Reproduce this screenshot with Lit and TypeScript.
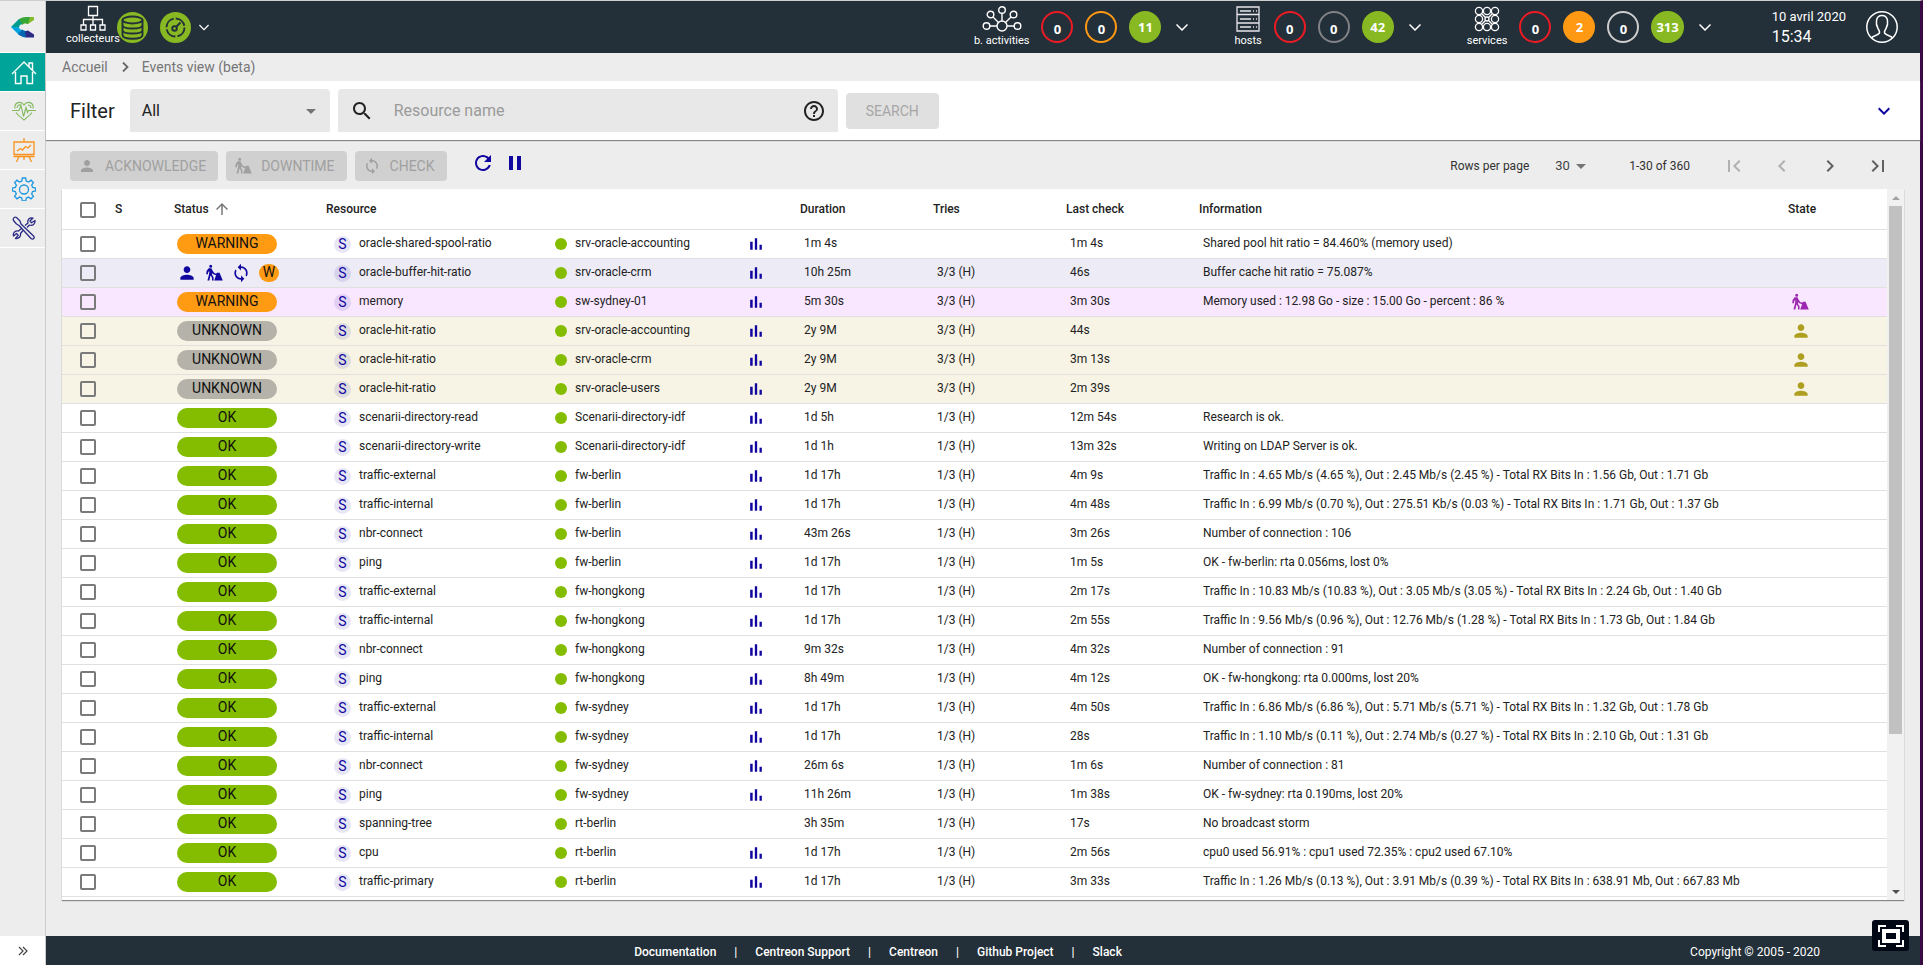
import { LitElement, html, css, svg, nothing } from "lit";
import { customElement } from "lit/decorators.js";
import { classMap } from "lit/directives/class-map.js";

type Status = "WARNING" | "UNKNOWN" | "OK";
interface Row {
  status: Status;
  name: string;
  parent: string;
  duration: string;
  tries: string;
  last: string;
  info: string;
  graph?: boolean;
  state?: "downtime" | "ack";
  hover?: boolean;
}

const r = (
  status: Status, name: string, parent: string, duration: string,
  tries: string, last: string, info: string, extra: Partial<Row> = {},
): Row => ({ status, name, parent, duration, tries, last, info, graph: true, ...extra });

const H3 = "3/3 (H)";
const H1 = "1/3 (H)";

const ROWS: Row[] = [
  r("WARNING", "oracle-shared-spool-ratio", "srv-oracle-accounting", "1m 4s", "", "1m 4s", "Shared pool hit ratio = 84.460% (memory used)"),
  r("WARNING", "oracle-buffer-hit-ratio", "srv-oracle-crm", "10h 25m", H3, "46s", "Buffer cache hit ratio = 75.087%", { hover: true }),
  r("WARNING", "memory", "sw-sydney-01", "5m 30s", H3, "3m 30s", "Memory used : 12.98 Go - size : 15.00 Go - percent : 86 %", { state: "downtime" }),
  r("UNKNOWN", "oracle-hit-ratio", "srv-oracle-accounting", "2y 9M", H3, "44s", "", { state: "ack" }),
  r("UNKNOWN", "oracle-hit-ratio", "srv-oracle-crm", "2y 9M", H3, "3m 13s", "", { state: "ack" }),
  r("UNKNOWN", "oracle-hit-ratio", "srv-oracle-users", "2y 9M", H3, "2m 39s", "", { state: "ack" }),
  r("OK", "scenarii-directory-read", "Scenarii-directory-idf", "1d 5h", H1, "12m 54s", "Research is ok."),
  r("OK", "scenarii-directory-write", "Scenarii-directory-idf", "1d 1h", H1, "13m 32s", "Writing on LDAP Server is ok."),
  r("OK", "traffic-external", "fw-berlin", "1d 17h", H1, "4m 9s", "Traffic In : 4.65 Mb/s (4.65 %), Out : 2.45 Mb/s (2.45 %) - Total RX Bits In : 1.56 Gb, Out : 1.71 Gb"),
  r("OK", "traffic-internal", "fw-berlin", "1d 17h", H1, "4m 48s", "Traffic In : 6.99 Mb/s (0.70 %), Out : 275.51 Kb/s (0.03 %) - Total RX Bits In : 1.71 Gb, Out : 1.37 Gb"),
  r("OK", "nbr-connect", "fw-berlin", "43m 26s", H1, "3m 26s", "Number of connection : 106"),
  r("OK", "ping", "fw-berlin", "1d 17h", H1, "1m 5s", "OK - fw-berlin: rta 0.056ms, lost 0%"),
  r("OK", "traffic-external", "fw-hongkong", "1d 17h", H1, "2m 17s", "Traffic In : 10.83 Mb/s (10.83 %), Out : 3.05 Mb/s (3.05 %) - Total RX Bits In : 2.24 Gb, Out : 1.40 Gb"),
  r("OK", "traffic-internal", "fw-hongkong", "1d 17h", H1, "2m 55s", "Traffic In : 9.56 Mb/s (0.96 %), Out : 12.76 Mb/s (1.28 %) - Total RX Bits In : 1.73 Gb, Out : 1.84 Gb"),
  r("OK", "nbr-connect", "fw-hongkong", "9m 32s", H1, "4m 32s", "Number of connection : 91"),
  r("OK", "ping", "fw-hongkong", "8h 49m", H1, "4m 12s", "OK - fw-hongkong: rta 0.000ms, lost 20%"),
  r("OK", "traffic-external", "fw-sydney", "1d 17h", H1, "4m 50s", "Traffic In : 6.86 Mb/s (6.86 %), Out : 5.71 Mb/s (5.71 %) - Total RX Bits In : 1.32 Gb, Out : 1.78 Gb"),
  r("OK", "traffic-internal", "fw-sydney", "1d 17h", H1, "28s", "Traffic In : 1.10 Mb/s (0.11 %), Out : 2.74 Mb/s (0.27 %) - Total RX Bits In : 2.10 Gb, Out : 1.31 Gb"),
  r("OK", "nbr-connect", "fw-sydney", "26m 6s", H1, "1m 6s", "Number of connection : 81"),
  r("OK", "ping", "fw-sydney", "11h 26m", H1, "1m 38s", "OK - fw-sydney: rta 0.190ms, lost 20%"),
  r("OK", "spanning-tree", "rt-berlin", "3h 35m", H1, "17s", "No broadcast storm", { graph: false }),
  r("OK", "cpu", "rt-berlin", "1d 17h", H1, "2m 56s", "cpu0 used 56.91% : cpu1 used 72.35% : cpu2 used 67.10%"),
  r("OK", "traffic-primary", "rt-berlin", "1d 17h", H1, "3m 33s", "Traffic In : 1.26 Mb/s (0.13 %), Out : 3.91 Mb/s (0.39 %) - Total RX Bits In : 638.91 Mb, Out : 667.83 Mb"),
];

const PATHS = {
  person: "M12 12c2.21 0 4-1.79 4-4s-1.79-4-4-4-4 1.79-4 4 1.79 4 4 4zm0 2c-2.67 0-8 1.34-8 4v2h16v-2c0-2.66-5.33-4-8-4z",
  sync: "M12 4V1L8 5l4 4V6c3.31 0 6 2.69 6 6 0 1.01-.25 1.97-.7 2.8l1.46 1.46C19.54 15.03 20 13.57 20 12c0-4.42-3.58-8-8-8zm0 14c-3.31 0-6-2.69-6-6 0-1.01.25-1.97.7-2.8L5.24 7.74C4.46 8.97 4 10.43 4 12c0 4.42 3.58 8 8 8v3l4-4-4-4v3z",
  worker: "M7.6 1a2 2 0 1 1 0 4 2 2 0 0 1 0-4zM4.800 5.500h3.800l1.600 3.500 2.200 3 1.200.8h1.600l.8-1.300h3.400L23.700 22H12.200l2.600-7-3.700-1.400-1.300-1.700-.4 2.600 2 3V22H9.300v-4l-2-2.600L5.800 22H3.300l2.200-8.600.3-4-1.500 1.200-.4 3.200H1.700l.4-4.600z",
  search: "M15.5 14h-.79l-.28-.27C15.41 12.59 16 11.11 16 9.5 16 5.91 13.09 3 9.5 3S3 5.91 3 9.5 5.91 16 9.5 16c1.61 0 3.09-.59 4.23-1.57l.27.28v.79l5 4.99L20.49 19l-4.99-5zm-6 0C7.01 14 5 11.99 5 9.5S7.01 5 9.5 5 14 7.01 14 9.5 11.99 14 9.5 14z",
  help: "M11 18h2v-2h-2v2zm1-16C6.48 2 2 6.48 2 12s4.48 10 10 10 10-4.48 10-10S17.52 2 12 2zm0 18c-4.41 0-8-3.59-8-8s3.59-8 8-8 8 3.59 8 8-3.59 8-8 8zm0-14c-2.21 0-4 1.79-4 4h2c0-1.1.9-2 2-2s2 .9 2 2c0 2-3 1.75-3 5h2c0-2.25 3-2.5 3-5 0-2.21-1.79-4-4-4z",
  refresh: "M17.65 6.35C16.2 4.9 14.21 4 12 4c-4.42 0-7.99 3.58-7.99 8s3.57 8 7.99 8c3.73 0 6.84-2.55 7.73-6h-2.08c-.82 2.33-3.04 4-5.65 4-3.31 0-6-2.69-6-6s2.69-6 6-6c1.66 0 3.14.69 4.22 1.78L13 11h7V4l-2.35 2.35z",
  pause: "M6 19h4V5H6v14zm8-14v14h4V5h-4z",
  bars: "M5 9.2h3V19H5zM10.6 5h2.8v14h-2.8zm5.6 8H19v6h-2.8z",
  expand: "M16.59 8.59L12 13.17 7.41 8.59 6 10l6 6 6-6z",
  drop: "M7 10l5 5 5-5z",
  up: "M4 12l1.41 1.41L11 7.83V20h2V7.83l5.58 5.59L20 12l-8-8-8 8z",
  left: "M15.41 7.41L14 6l-6 6 6 6 1.41-1.41L10.83 12z",
  right: "M10 6L8.59 7.41 13.17 12l-4.58 4.59L10 18l6-6z",
  first: "M18.41 16.59L13.82 12l4.59-4.59L17 6l-6 6 6 6zM6 6h2v12H6z",
  last: "M5.59 7.41L10.18 12l-4.59 4.59L7 18l6-6-6-6zM16 6h2v12h-2z",
};
const icon = (name: keyof typeof PATHS, size = 24) =>
  html`<svg class="icon" width=${size} height=${size} viewBox="0 0 24 24" fill="currentColor" aria-hidden="true"><path d=${PATHS[name]}></path></svg>`;

const shared = css`
  * { box-sizing: border-box; }
  svg { display: block; flex: none; }
  button { font: inherit; color: inherit; border: 0; padding: 0; background: none; display: flex; align-items: center; justify-content: center; }
  a { color: inherit; text-decoration: none; }
`;

@customElement("side-nav")
export class SideNav extends LitElement {
  static styles = [shared, css`
    :host { display: flex; flex-direction: column; width: 46px; background: #ededed; border-right: 1px solid #ccc; }
    .logo { height: 52px; display: flex; align-items: center; justify-content: center; padding-left: 1px; border-bottom: 1px solid #fff; }
    .item { height: 39px; display: flex; align-items: center; justify-content: center; border-bottom: 1px solid #fff; padding-left: 3px; }
    .active { background: #00a499; }
    .expand { margin-top: auto; height: 29px; background: #fff; width: 100%; color: #444; }
  `];
  render() {
    return html`
      <a class="logo" href="#" aria-label="Centreon">
        <svg width="24" height="22" viewBox="0 0 24 22">
          <path d="M15 1h8v3l-6 4-4-1z" fill="#84bd2a"></path>
          <path d="M15 1c-3 0-5.500 1-8 3l4 5c2-2 4-2.500 6-1l2-7z" fill="#36a635"></path>
          <path d="M8 3L0 11l8 .5c0-1.500 1-3 3-3.500z" fill="#009c8d"></path>
          <path d="M0 11l8 8 3-5c-2-.5-3-1.500-3-3z" fill="#00a3e0"></path>
          <path d="M7 18c2.500 2 5 3.500 8 3.500l2-7c-2 1-4 .5-6-1z" fill="#0067b1"></path>
          <path d="M15 21.500h8v-3l-6-4-3 1z" fill="#2b2b86"></path>
        </svg>
      </a>
      <a class="item active" href="#" aria-label="Accueil">
        <svg width="26" height="25" viewBox="0 0 26 25" fill="none" stroke="#fff" stroke-width="1.400">
          <path d="M1 14L13 2l12 12M4.500 12v11.500H10V16h6v7.500h5.500V12M18 6.500V3h3.500v7"></path>
        </svg>
      </a>
      <a class="item" href="#" aria-label="Monitoring">
        <svg width="26" height="20" viewBox="0 0 26 20" fill="none" stroke="#7fb95c" stroke-width="1.100">
          <path d="M1 9.500h7l2-5 2.500 11 2.500-9 1.500 5 1-2H25M4 7.500C3 1 10-.5 13 4c3-4.500 10-3 9 3.500M5 11.500c2 3 5 5 8 7.500 3-2.500 6-4.500 8-7.500M6 7c0-2.500 2-3.500 4-3M20 7c0-2-1-3-3-3"></path>
        </svg>
      </a>
      <a class="item" href="#" aria-label="Reporting">
        <svg width="24" height="24" viewBox="0 0 24 24" fill="none" stroke="#f7931e" stroke-width="1.300">
          <path d="M2 4h20v12.500H2zM1.500 18.500h21M12 0v4M7 18.500L4.500 24M17 18.500l2.500 5.500M12 18.500V22M5 13l3.500-2.500 2 1.500 3-3.500 2.500 1.500 3-3"></path>
        </svg>
      </a>
      <a class="item" href="#" aria-label="Configuration">
        <svg width="24" height="24" viewBox="0 0 24 24" fill="none" stroke="#1c97e0" stroke-width="1.300">
          <path d="M10.300 1h3.400l.5 3 2.300 1 2.600-1.800 2.300 2.400-1.700 2.500 1 2.400 2.900.5v3l-3 .6-1 2.300 1.800 2.500-2.400 2.400-2.500-1.700-2.300 1-.5 2.900h-3.400l-.5-3-2.300-.9L5 21.800l-2.400-2.400 1.700-2.500-1-2.300-2.900-.6v-3l3-.5 1-2.400L2.600 5.600 5 3.200 7.500 5l2.300-1z"></path>
          <circle cx="12" cy="12.500" r="4.500"></circle>
        </svg>
      </a>
      <a class="item" href="#" aria-label="Administration">
        <svg width="24" height="24" viewBox="0 0 24 24" fill="none" stroke="#2b2b86" stroke-width="1.300" stroke-linejoin="round">
          <path d="M1.500 4.500c-1-2 1-4 3-3L8 5l1 3 12.500 12c2 2-.5 4-2.500 2.500L7 9.500 4.500 8z"></path>
          <path d="M13 9.500L16 7c-1-3 1.500-6 5-5l-3 3 1.500 1.800L23 4.500c.5 3.500-2.500 5.500-5.500 4.500L15 11.500M9.500 12.500L6.500 15c-3-.5-6 1.500-5 5l3-2.500 1.700 1.800L3.500 22.500C7 23 9 20.500 8.500 17.500l2.500-3"></path>
        </svg>
      </a>
      <button class="expand" aria-label="Expand menu">
        <svg width="10" height="10" viewBox="0 0 10 10" fill="none" stroke="currentColor" stroke-width="1.200"><path d="M1 1l4 4-4 4M5 1l4 4-4 4"></path></svg>
      </button>`;
  }
}

@customElement("top-bar")
export class TopBar extends LitElement {
  static styles = [shared, css`
    :host { display: flex; height: 52px; background: #232f39; color: #fff; padding: 0 22px 0 20px; font: 11px/14px Roboto, sans-serif; }
    .group { display: flex; gap: 12px; height: 52px; align-items: center; }
    .tag { display: flex; flex-direction: column; align-items: center; gap: 2px; }
    .pollers .tag { margin-right: -15px; line-height: 12px; padding-bottom: 4px; }
    .right { display: flex; margin-left: auto; gap: 46px; }
    .pill { height: 32px; min-width: 32px; border-radius: 16px; padding: 0 3px; display: flex; align-items: center; justify-content: center; font: bold 13px/16px "Open Sans", sans-serif; border: 2px solid transparent; }
    .hollow { padding-top: 4px; }
    .red { border-color: #ed1c24; }
    .orange { border-color: #ff9913; }
    .grey { border-color: #818285; }
    .light { border-color: #cdcdcd; }
    .full-green { background: #88b922; }
    .full-orange { background: #ff9913; }
    .more { margin-left: 3px; }
    .pollers .more { margin-left: -4px; }
    .clock { margin-left: 15px; display: flex; flex-direction: column; align-self: center; font-size: 13px; line-height: 20px; white-space: nowrap; }
    .time { font-size: 16px; }
    .user { margin-left: -26px; }
  `];
  private more = (label: string, w = 12) => html`<button class="more" aria-label=${label}>
    <svg width=${w} height="7" viewBox="0 0 12 7" fill="none" stroke="#fff" stroke-width="1.500"><path d="M.5.500l5.500 5.500 5.500-5.500"></path></svg></button>`;
  private pill = (n: string, kind: string) =>
    html`<a href="#" class=${classMap({ pill: true, hollow: !kind.startsWith("full"), [kind]: true })}>${n}</a>`;
  render() {
    const circles = [[5, 5], [13, 5], [21, 5], [5, 13], [21, 13], [5, 21], [13, 21], [21, 21]];
    return html`
      <div class="group pollers">
        <div class="tag">
          <svg width="26" height="26" viewBox="0 0 26 26" fill="none" stroke="#fff" stroke-width="1.300">
            <path d="M8.500 1.500h9v9h-9zM13 10.500V20M3.500 20v-5.500h19V20M1 20h5v5H1zM10.500 20h5v5h-5zM20 20h5v5h-5z"></path>
          </svg>
          <span>collecteurs</span>
        </div>
        <svg width="31" height="31" viewBox="0 0 31 31"><circle cx="15.500" cy="15.500" r="15.500" fill="#88b922"></circle>
          <g fill="none" stroke="#232f39" stroke-width="1.900"><ellipse cx="15.500" cy="8" rx="10" ry="3.500"></ellipse>
          <path d="M5.500 8v15c0 5 20 5 20 0V8M5.500 13c0 4.700 20 4.700 20 0M5.500 18c0 4.700 20 4.700 20 0"></path></g></svg>
        <svg width="31" height="31" viewBox="0 0 31 31"><circle cx="15.500" cy="15.500" r="15.500" fill="#88b922"></circle>
          <g fill="none" stroke="#232f39" stroke-width="1.900"><circle cx="15.500" cy="15.500" r="9" stroke-dasharray="12 2.140"></circle><circle cx="14.500" cy="16.500" r="2.300"></circle><path d="M16 15l4.500-4.500"></path></g></svg>
        ${this.more("Pollers details", 10)}
      </div>
      <div class="right">
        <div class="group">
          <div class="tag">
            <svg width="40" height="26" viewBox="0 0 40 26" fill="none" stroke="#fff" stroke-width="1.400">
              <circle cx="20" cy="4" r="3.300"></circle><circle cx="8.500" cy="8.500" r="3.300"></circle><circle cx="31.500" cy="8.500" r="3.300"></circle>
              <circle cx="4.500" cy="20" r="3.300"></circle><circle cx="35.500" cy="20" r="3.300"></circle><circle cx="20" cy="20" r="5"></circle>
              <path d="M20 7.500V15M11 11l5.500 5.500M29 11l-5.500 5.500M8 20h7M25 20h7"></path>
            </svg>
            <span>b. activities</span>
          </div>
          ${this.pill("0", "red")}${this.pill("0", "orange")}${this.pill("11", "full-green")}
          ${this.more("Business activities details")}
        </div>
        <div class="group">
          <div class="tag">
            <svg width="24" height="26" viewBox="0 0 24 26" fill="none" stroke="#e8e6ea" stroke-width="1.300">
              <path d="M1 1h22v24H1zM1 8.500h22M1 17h22M4 5h11M4 13h11M4 21h11M17 5h1M20 5h1M17 13h1M20 13h1M17 21h1M20 21h1"></path>
            </svg>
            <span>hosts</span>
          </div>
          ${this.pill("0", "red")}${this.pill("0", "grey")}${this.pill("42", "full-green")}
          ${this.more("Hosts details")}
        </div>
        <div class="group">
          <div class="tag">
            <svg width="26" height="26" viewBox="0 0 26 26" fill="none" stroke="#fff" stroke-width="1.300">
              ${circles.map(([x, y]) => svg`<circle cx=${x} cy=${y} r="3.600"></circle>`)}
              <circle cx="13" cy="13" r="2"></circle><path d="M7.500 7.500l4 4M18.500 7.500l-4 4M7.500 18.500l4-4M18.500 18.500l-4-4"></path>
            </svg>
            <span>services</span>
          </div>
          ${this.pill("0", "red")}${this.pill("2", "full-orange")}${this.pill("0", "light")}${this.pill("313", "full-green")}
          ${this.more("Services details")}
        </div>
        <div class="clock"><span>10 avril 2020</span><span class="time">15:34</span></div>
        <button class="user" aria-label="Profile">
          <svg width="32" height="32" viewBox="0 0 32 32" fill="none" stroke="#fff" stroke-width="1.500">
            <circle cx="16" cy="16" r="15.200"></circle>
            <path d="M5.500 27c1-2.500 6-2 8-5 .5-1.500-.5-3-1.500-4.500-1.500-2.500-2-5-1.500-8C11 6 13.500 4.500 16 4.500s5 1.500 5.500 5c.5 3 0 5.500-1.500 8-1 1.500-2 3-1.500 4.500 2 3 7 2.500 8 5"></path>
          </svg>
        </button>
      </div>`;
  }
}

@customElement("filter-bar")
export class FilterBar extends LitElement {
  static styles = [shared, css`
    :host { display: flex; align-items: center; gap: 8px; height: 59px; padding: 0 24px; background: #fff; font: 16px/20px Roboto, sans-serif; color: #222; box-shadow: 0 1px 1px #888; position: relative; }
    .title { font-size: 20px; line-height: 24px; margin: 0 7px 0 0; font-weight: 400; }
    .box { height: 43px; background: #e8e8e8; border-radius: 4px 4px 0 0; display: flex; align-items: center; }
    .select { width: 200px; display: grid; color: #757575; }
    .select > * { grid-area: 1 / 1; }
    .select svg { justify-self: end; margin-right: 7px; pointer-events: none; }
    select { appearance: none; width: 100%; height: 43px; border: 0; background: none; font: inherit; color: #222; padding: 0 12px; }
    .query { width: 500px; padding: 0 12px 0 12px; }
    input { flex: 1; min-width: 0; border: 0; background: none; font: inherit; padding: 0 20px; color: #222; outline: none; }
    input::placeholder { color: #9a9a9a; opacity: 1; }
    .search { height: 36px; padding: 0 20px; border-radius: 4px; background: #e0e0e0; color: #a6a6a6; font-size: 14px; }
    .toggle { margin-left: auto; color: #10069f; }
  `];
  render() {
    return html`
      <h1 class="title">Filter</h1>
      <div class="box select">
        <select aria-label="Saved filter"><option>All</option></select>
        ${icon("drop")}
      </div>
      <div class="box query">
        ${icon("search")}
        <input type="text" aria-label="Resource name" placeholder="Resource name" />
        ${icon("help")}
      </div>
      <button class="search" disabled>SEARCH</button>
      <button class="toggle" aria-label="More criteria">${icon("expand")}</button>`;
  }
}

@customElement("action-bar")
export class ActionBar extends LitElement {
  static styles = [shared, css`
    :host { display: flex; align-items: center; height: 49px; padding: 2px 18px 0 24px; gap: 8px; font: 12px/16px Roboto, sans-serif; color: #333; }
    .action { height: 30px; padding: 0 12px 0 8px; gap: 9px; border-radius: 4px; background: #d0d0d0; color: #a0a0a0; font-size: 14px; }
    .icons { display: flex; gap: 8px; margin-left: 16px; height: 30px; color: #10069f; }
    .icons button { height: 24px; }
    .pager { margin-left: auto; display: flex; align-items: center; white-space: nowrap; }
    .size { display: grid; margin: 0 36px 0 18px; width: 46px; color: #757575; align-items: center; }
    .size > * { grid-area: 1 / 1; }
    .size svg { justify-self: end; pointer-events: none; }
    select { appearance: none; border: 0; background: none; font: inherit; font-size: 13px; color: #444; padding: 0 8px; width: 100%; }
    .nav { display: flex; margin-left: 20px; }
    .nav button { width: 48px; height: 30px; color: #616161; }
    .nav button:disabled { color: #b0b0b0; }
  `];
  render() {
    return html`
      <button class="action" disabled>${icon("person", 18)}ACKNOWLEDGE</button>
      <button class="action" disabled>${icon("worker", 18)}DOWNTIME</button>
      <button class="action" disabled>${icon("sync", 18)}CHECK</button>
      <div class="icons">
        <button aria-label="Refresh">${icon("refresh")}</button>
        <button aria-label="Pause autorefresh">${icon("pause")}</button>
      </div>
      <div class="pager">
        <label for="size">Rows per page</label>
        <div class="size"><select id="size"><option>30</option></select>${icon("drop")}</div>
        <span>1-30 of 360</span>
        <div class="nav">
          <button disabled aria-label="First page">${icon("first")}</button>
          <button disabled aria-label="Previous page">${icon("left")}</button>
          <button aria-label="Next page">${icon("right")}</button>
          <button aria-label="Last page">${icon("last")}</button>
        </div>
      </div>`;
  }
}

@customElement("resource-table")
export class ResourceTable extends LitElement {
  static styles = [shared, css`
    :host { display: flex; flex: 1; min-height: 0; margin: 0 16px 36px; background: #fff; box-shadow: 0 1px 1px #888; font: 12px/16px Roboto, sans-serif; color: #222; }
    .view { flex: 1; min-width: 0; overflow: hidden; }
    table { width: 100%; table-layout: fixed; border-collapse: separate; border-spacing: 0; }
    th { height: 41px; padding: 0 4px 1px; text-align: left; font-weight: 500; border-bottom: 1px solid #e0e0e0; white-space: nowrap; }
    td { height: 29px; padding: 0 8px; border-bottom: 1px solid #e0e0e0; white-space: nowrap; vertical-align: middle; }
    .txt { padding-bottom: 3px; }
    .c-check { width: 46px; } .c-sev { width: 62px; } .c-status { width: 152px; } .c-res { width: 225px; }
    .c-parent { width: 195px; } .c-graph { width: 54px; } .c-num { width: 133px; } .c-state { width: 103px; }
    .check { padding: 0 0 0 18px; }
    th.check { padding-top: 2px; padding-bottom: 0; }
    th.sev { padding-left: 7px; }
    input { appearance: none; display: block; margin: 0; width: 16px; height: 16px; border: 2px solid #7a7a7a; border-radius: 2px; }
    .sort { display: flex; align-items: center; gap: 4px; }
    .sort svg { color: #757575; }
    td.status { padding-left: 7px; }
    .chip { width: 100px; height: 20px; border-radius: 10px; font-size: 14px; line-height: 19px; text-align: center; color: #111; }
    .WARNING { background: #ff9a13; } .UNKNOWN { background: #b5b3a9; } .OK { background: #84bd00; }
    .quick { display: flex; align-items: center; gap: 8px; color: #10069f; }
    .mini { width: 20px; height: 18px; line-height: 17px; }
    td.res { padding-left: 12px; }
    .pair { display: flex; align-items: center; gap: 8px; }
    .pair > span:last-child { padding-bottom: 3px; }
    .kind { width: 17px; height: 17px; border-radius: 50%; background: rgba(16, 6, 159, 0.1); color: #10069f; font-size: 14px; line-height: 16px; text-align: center; }
    .dot { width: 12px; height: 12px; border-radius: 50%; background: #84bd00; }
    .graph { color: #10069f; padding: 0 4px; }
    .hover { background: #ecebf6; }
    .down { background: #f9e7ff; } .down .state { color: #9c27b0; }
    .ack { background: #f7f4e5; } .ack .state { color: #ae9f21; }
    .state { padding: 0 7px; }
    .bar { width: 17px; background: #f1f1f1; display: flex; flex-direction: column; }
    .arrow { height: 17px; display: flex; align-items: center; justify-content: center; color: #a3a3a3; }
    .arrow.end { color: #505050; }
    .track { flex: 1; padding: 0 2px; }
    .thumb { height: 78%; background: #c1c1c1; }
  `];
  private row(d: Row, i: number) {
    return html`<tr class=${classMap({ hover: !!d.hover, down: d.state === "downtime", ack: d.state === "ack" })}>
      <td class="check"><input type="checkbox" aria-label=${`Select row ${i + 1}`} /></td>
      <td></td>
      <td class="status">${d.hover
        ? html`<div class="quick">${icon("person", 20)}${icon("worker", 18)}${icon("sync", 20)}<div class="chip mini WARNING">W</div></div>`
        : html`<div class="chip ${d.status}">${d.status}</div>`}</td>
      <td class="res"><div class="pair"><span class="kind">S</span><span>${d.name}</span></div></td>
      <td><div class="pair"><span class="dot"></span><span>${d.parent}</span></div></td>
      <td class="graph">${d.graph ? icon("bars", 20) : nothing}</td>
      <td class="txt">${d.duration}</td>
      <td class="txt">${d.tries}</td>
      <td class="txt">${d.last}</td>
      <td class="txt">${d.info}</td>
      <td class="state">${d.state ? icon(d.state === "ack" ? "person" : "worker", d.state === "ack" ? 20 : 18) : nothing}</td>
    </tr>`;
  }
  render() {
    return html`
      <div class="view"><table>
        <colgroup><col class="c-check" /><col class="c-sev" /><col class="c-status" /><col class="c-res" /><col class="c-parent" /><col class="c-graph" /><col class="c-num" /><col class="c-num" /><col class="c-num" /><col /><col class="c-state" /></colgroup>
        <thead><tr>
          <th class="check"><input type="checkbox" aria-label="Select all" /></th>
          <th class="sev">S</th>
          <th><div class="sort">Status ${icon("up", 18)}</div></th>
          <th>Resource</th><th></th><th></th><th>Duration</th><th>Tries</th><th>Last check</th><th>Information</th><th>State</th>
        </tr></thead>
        <tbody>${ROWS.map((d, i) => this.row(d, i))}</tbody>
      </table></div>
      <div class="bar" aria-hidden="true">
        <div class="arrow"><svg width="8" height="4" viewBox="0 0 8 4" fill="currentColor"><path d="M0 4l4-4 4 4z"></path></svg></div>
        <div class="track"><div class="thumb"></div></div>
        <div class="arrow end"><svg width="8" height="4" viewBox="0 0 8 4" fill="currentColor"><path d="M0 0l4 4 4-4z"></path></svg></div>
      </div>`;
  }
}

@customElement("app-root")
export class AppRoot extends LitElement {
  static styles = [shared, css`
    :host { display: flex; height: 100vh; box-sizing: border-box; border-top: 1px solid #cdd1cd; border-right: 3px solid #3b0a45; background: #ededed; font: 14px/20px Roboto, sans-serif; color: #222; }
    main { flex: 1; min-width: 0; display: flex; flex-direction: column; }
    .crumbs { height: 28px; display: flex; align-items: center; padding-left: 16px; gap: 12px; color: #757575; }
    .crumbs svg { width: 10px; height: 10px; }
    footer { height: 29px; background: #232f39; color: #fff; display: flex; align-items: center; font-size: 12px; line-height: 16px; font-weight: 500; padding: 2px 100px 0 20px; }
    .links { margin: 0 auto; display: flex; gap: 18px; }
    .copy { font-weight: 400; }
    .full { position: absolute; right: 14px; bottom: 14px; width: 37px; height: 31px; border-radius: 3px; background: #000714; }
  `];
  render() {
    const links = ["Documentation", "Centreon Support", "Centreon", "Github Project", "Slack"];
    return html`
      <side-nav></side-nav>
      <main>
        <top-bar></top-bar>
        <nav class="crumbs" aria-label="Breadcrumb">
          <a href="#">Accueil</a>
          <svg viewBox="0 0 10 10" fill="none" stroke="#666" stroke-width="1.800"><path d="M3 .5L7.500 5 3 9.500"></path></svg>
          <a href="#">Events view (beta)</a>
        </nav>
        <filter-bar></filter-bar>
        <action-bar></action-bar>
        <resource-table></resource-table>
        <footer>
          <div class="links">${links.map((l, i) => html`${i ? html`<span>|</span>` : nothing}<a href="#">${l}</a>`)}</div>
          <div class="copy">Copyright © 2005 - 2020</div>
        </footer>
      </main>
      <button class="full" aria-label="Full screen">
        <svg width="26" height="22" viewBox="0 0 26 22" fill="none" stroke="#fff">
          <path stroke-width="2" d="M1 7V1h7M18 1h7v6M25 15v6h-7M8 21H1v-6"></path>
          <path stroke-width="4" d="M6 6h14v10H6z"></path>
        </svg>
      </button>`;
  }
}
